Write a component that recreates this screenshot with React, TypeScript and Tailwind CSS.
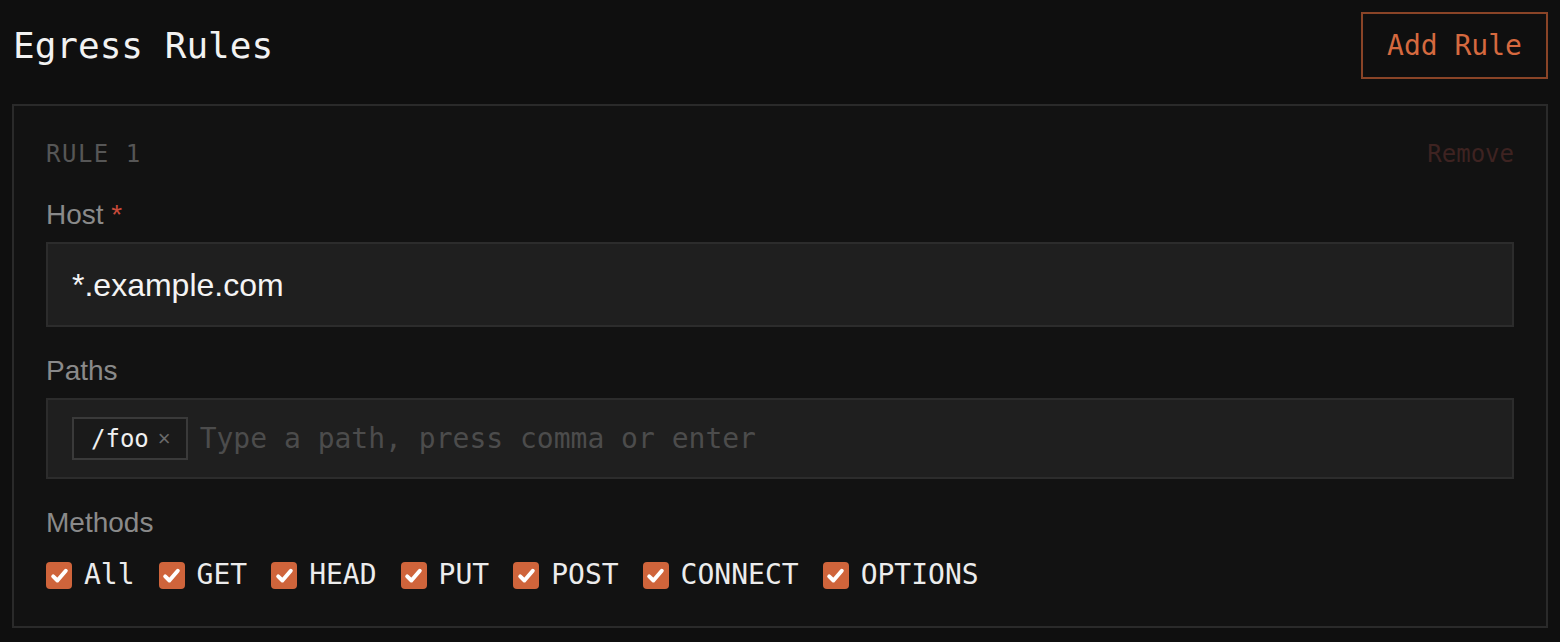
import React from "react";

const mono = "font-['DejaVu_Sans_Mono',monospace]";
const sans = "font-['Liberation_Sans',Arial,sans-serif]";

const methods = ["All", "GET", "HEAD", "PUT", "POST", "CONNECT", "OPTIONS"];

const Check = ({ label }: { label: string }) => (
  <label className="flex items-center gap-3">
    <span className="flex h-[27px] w-[26px] items-center justify-center rounded-[4px] bg-[#cf643b]">
      <svg viewBox="0 0 16 16" className="h-[21px] w-[21px]">
        <path
          d="M3.2 8.6 L6.4 11.8 L12.8 4.4"
          fill="none"
          stroke="#fff"
          strokeWidth="3"
          strokeLinecap="round"
          strokeLinejoin="round"
        />
      </svg>
    </span>
    <span className={`${mono} text-[28px] leading-9 text-[#ececec]`}>{label}</span>
  </label>
);

const FieldLabel = ({ children }: { children: React.ReactNode }) => (
  <div className={`${sans} text-[28px] leading-9 text-[#8a8a8a]`}>{children}</div>
);

export default function App() {
  return (
    <div className="min-h-[642px] bg-[#0f0f0f] p-3">
      <div className="flex h-[67px] items-center justify-between">
        <h1 className={`${mono} pl-px text-[36px] text-[#f2f2f2]`}>Egress Rules</h1>
        <button
          className={`${mono} h-[67px] w-[187px] border-2 border-[#8a4427] text-[28px] text-[#d5693f]`}
        >
          Add Rule
        </button>
      </div>

      <div className="mt-[25px] border-2 border-[#2a2a2a] bg-[#121212] px-8 pt-[33px] pb-[33px]">
        <div className="flex items-center justify-between">
          <span className={`${mono} text-[24px] leading-[30px] tracking-[1.5px] text-[#565656]`}>
            RULE 1
          </span>
          <span className={`${mono} text-[24px] leading-[30px] text-[#3e2321]`}>Remove</span>
        </div>

        <div className="mt-[28px]">
          <FieldLabel>
            Host <span className="text-[#c94a3a]">*</span>
          </FieldLabel>
          <div className="mt-[9px] flex h-[85px] items-center border-2 border-[#2c2c2c] bg-[#1f1f1f] px-6">
            <span className={`${sans} text-[32px] text-[#f4f4f4]`}>*.example.com</span>
          </div>
        </div>

        <div className="mt-[26px]">
          <FieldLabel>Paths</FieldLabel>
          <div className="mt-[9px] flex h-[81px] items-center gap-3 border-2 border-[#2c2c2c] bg-[#1f1f1f] px-6">
            <span className="flex h-[43px] items-center gap-[9px] border-2 border-[#3a3a3a] bg-[#1a1a1a] pl-[17px] pr-[15px]">
              <span className={`${mono} text-[24px] text-[#f0f0f0]`}>/foo</span>
              <span className={`${sans} text-[22px] text-[#6a6a6a]`}>×</span>
            </span>
            <span className={`${mono} text-[28px] text-[#4c4c4c]`}>
              Type a path, press comma or enter
            </span>
          </div>
        </div>

        <div className="mt-[26px]">
          <FieldLabel>Methods</FieldLabel>
          <div className="mt-4 flex gap-6">
            {methods.map((m) => (
              <Check key={m} label={m} />
            ))}
          </div>
        </div>
      </div>
    </div>
  );
}
